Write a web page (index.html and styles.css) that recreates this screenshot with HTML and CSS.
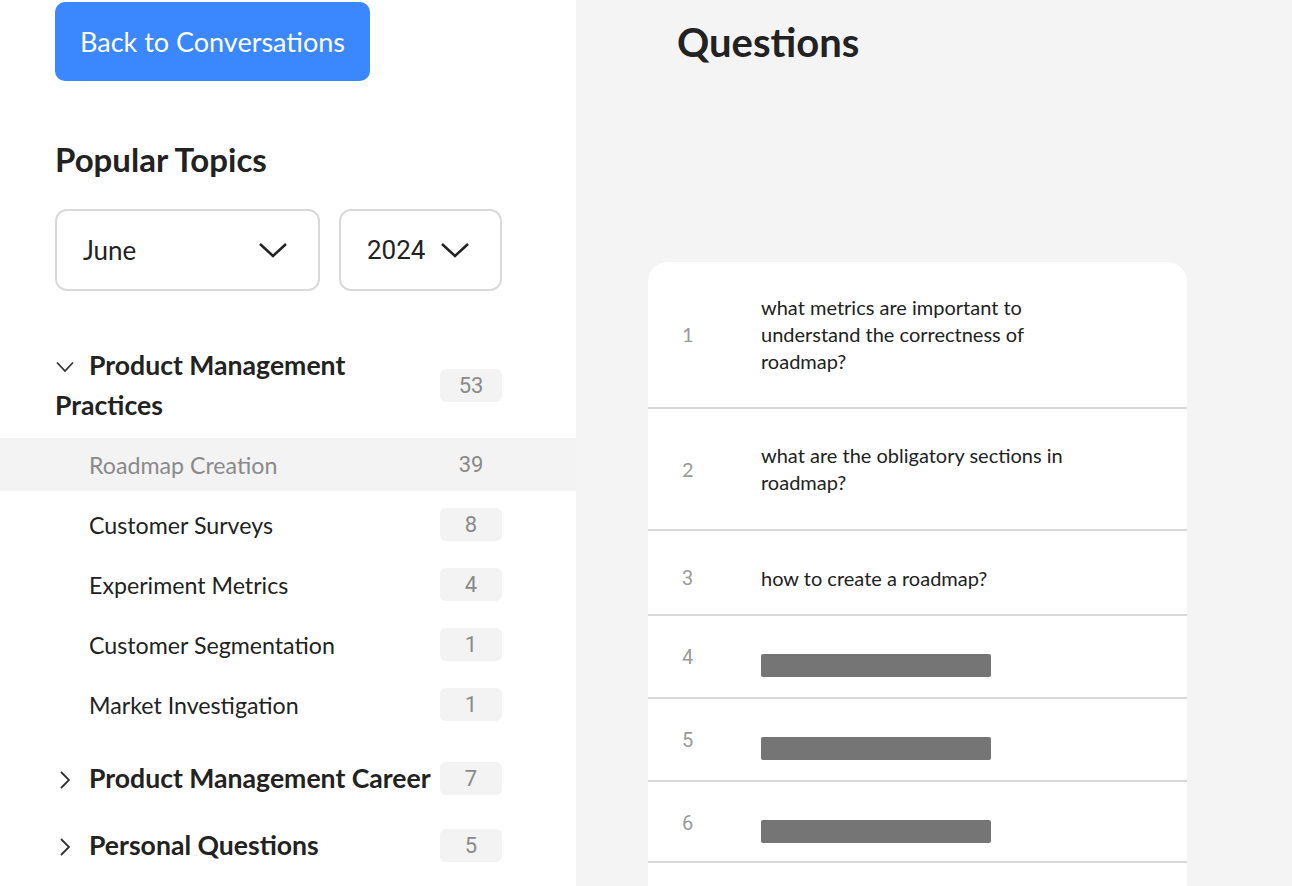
FILE: index.html
```html
<!DOCTYPE html>
<html lang="en">
<head>
  <meta charset="UTF-8">
  <title>Popular Topics</title>
  <link rel="stylesheet" href="styles.css">
</head>
<body>

  <div class="app">

    <aside class="sidebar">
      <button class="back-btn">Back to Conversations</button>

      <h2 class="side-title">Popular Topics</h2>

      <div class="filters">
        <div class="select select-month">
          <span>June</span>
          <svg class="select-caret" viewBox="0 0 30 16"><path d="M2 2 L15 14 L28 2"/></svg>
        </div>
        <div class="select select-year">
          <span class="digits">2024</span>
          <svg class="select-caret" viewBox="0 0 30 16"><path d="M2 2 L15 14 L28 2"/></svg>
        </div>
      </div>

      <div class="topic-group">
        <div class="group-head">
          <div class="group-title"><svg class="caret" viewBox="0 0 20 20"><path d="M2 5.5 L10 14 L18 5.5"/></svg>Product Management Practices</div>
          <span class="badge">53</span>
        </div>
        <ul class="sub-list">
          <li class="sub-item active"><span>Roadmap Creation</span><span class="badge">39</span></li>
          <li class="sub-item"><span>Customer Surveys</span><span class="badge">8</span></li>
          <li class="sub-item"><span>Experiment Metrics</span><span class="badge">4</span></li>
          <li class="sub-item"><span>Customer Segmentation</span><span class="badge">1</span></li>
          <li class="sub-item"><span>Market Investigation</span><span class="badge">1</span></li>
        </ul>
      </div>

      <div class="topic-group">
        <div class="group-head">
          <div class="group-title"><svg class="caret" viewBox="0 0 20 20"><path d="M6 2 L14 10 L6 18"/></svg>Product Management Career</div>
          <span class="badge">7</span>
        </div>
      </div>

      <div class="topic-group">
        <div class="group-head">
          <div class="group-title"><svg class="caret" viewBox="0 0 20 20"><path d="M6 2 L14 10 L6 18"/></svg>Personal Questions</div>
          <span class="badge">5</span>
        </div>
      </div>
    </aside>

    <main class="questions">
      <h1 class="q-title">Questions</h1>

      <div class="q-card">
        <div class="q-row">
          <span class="q-num">1</span>
          <p class="q-text">what metrics are important to understand the correctness of roadmap?</p>
        </div>
        <div class="q-row two">
          <span class="q-num">2</span>
          <p class="q-text">what are the obligatory sections in roadmap?</p>
        </div>
        <div class="q-row short">
          <span class="q-num alt">3</span>
          <p class="q-text">how to create a roadmap?</p>
        </div>
        <div class="q-row locked">
          <span class="q-num alt">4</span>
          <div class="q-bar"></div>
        </div>
        <div class="q-row locked">
          <span class="q-num alt">5</span>
          <div class="q-bar"></div>
        </div>
        <div class="q-row locked last">
          <span class="q-num alt">6</span>
          <div class="q-bar"></div>
        </div>
        <div class="q-row locked"></div>
      </div>
    </main>

  </div>

</body>
</html>
```

FILE: styles.css
```css
body {
  margin: 0; padding: 0;
  font-family: Lato, "Noto Sans", sans-serif;
  color: #222;
  overflow: hidden;
}
.app {
  display: flex;
  height: 100vh;
}

/* left column */
.sidebar {
  width: 576px;
  flex-shrink: 0;
  box-sizing: border-box;
  padding: 0 74px 0 55px;
  background: #fff;
  overflow: hidden;
}
.back-btn {
  display: block;
  margin-top: 2px;
  width: 315px; height: 79px;
  border: none; border-radius: 10px;
  background: #3b87fd;
  color: #fff;
  font-family: Lato, sans-serif;
  font-size: 27px;
  cursor: pointer;
}
.side-title {
  margin: 58px 0 0;
  font-size: 33px;
  line-height: 40px;
  font-weight: 700;
}
.filters {
  display: flex;
  gap: 19px;
  margin: 30px 0 54px;
}
.select {
  display: flex;
  align-items: center;
  justify-content: space-between;
  box-sizing: border-box;
  height: 82px;
  padding: 0 30px 0 26px;
  border: 2px solid #d9d9d9;
  border-radius: 12px;
  font-size: 26px;
}
.select-month { width: 265px; }
.select-year { width: 163px; }
.digits { font-family: Roboto, sans-serif; }
.select-caret {
  width: 30px; height: 16px;
  fill: none; stroke: #222; stroke-width: 2.5;
}

.topic-group { margin-top: 27px; }
.group-head {
  display: flex;
  align-items: center;
  gap: 6px;
}
.group-title {
  flex: 1;
  font-size: 26.6px;
  line-height: 40px;
  font-weight: 700;
}
.caret {
  width: 20px; height: 20px;
  margin-right: 14px;
  vertical-align: -2px;
  fill: none; stroke: #333; stroke-width: 1.8;
}
.badge {
  display: flex;
  align-items: center;
  justify-content: center;
  width: 62px; height: 33px;
  flex-shrink: 0;
  border-radius: 6px;
  background: #f3f3f3;
  color: #8a8a8a;
  font-family: Roboto, sans-serif;
  font-size: 22px;
}
.sub-list {
  list-style: none;
  margin: 13px -74px 0 -55px;
  padding: 0;
}
.sub-item {
  display: flex;
  align-items: center;
  justify-content: space-between;
  height: 53px;
  padding: 0 74px 0 89px;
  font-size: 23.2px;
}
.sub-item + .sub-item { margin-top: 7px; }
.sub-item.active { background: #f3f3f3; color: #8a8a8a; }

/* right column */
.questions {
  flex: 1;
  background: #f4f4f4;
  padding-left: 72px;
  overflow: hidden;
}
.q-title {
  margin: 18px 0 0 29px;
  font-size: 40px;
  line-height: 48px;
  font-weight: 700;
}
.q-card {
  width: 539px;
  margin-top: 196px;
  background: #fff;
  border-radius: 20px 20px 0 0;
}
.q-row {
  display: grid;
  grid-template-columns: 79px 1fr;
  align-items: center;
  padding: 32px 0 32px 34px;
  border-bottom: 2px solid #d9d9d9;
}
.q-row.two { padding-top: 33px; padding-bottom: 33px; }
.q-row.short { padding-top: 34px; padding-bottom: 22px; }
.q-row.locked {
  align-items: start;
  padding-top: 28px; padding-bottom: 20px;
}
.q-row.locked.last { padding-bottom: 18px; }
.q-num {
  font-size: 20px;
  line-height: 27px;
  color: #9a9a9a;
}
.q-num.alt { font-family: Roboto, sans-serif; }
.q-text {
  margin: 0;
  max-width: 320px;
  font-size: 20px;
  line-height: 27px;
}
.q-bar {
  margin-top: 10px;
  width: 230px; height: 23px;
  border-radius: 2px;
  background: #757575;
}
```
